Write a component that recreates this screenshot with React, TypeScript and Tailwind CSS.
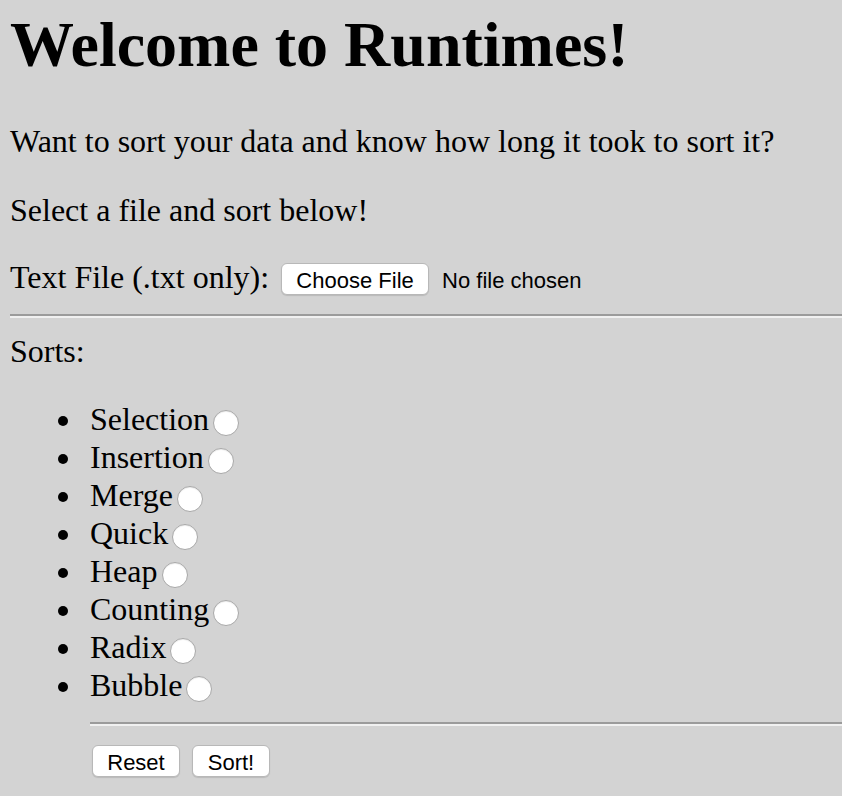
import React from "react";

const sorts = ["Selection", "Insertion", "Merge", "Quick", "Heap", "Counting", "Radix", "Bubble"];

function Btn({ w, children }: { w: string; children: React.ReactNode }) {
  return (
    <span
      className={`${w} h-[32px] flex items-center justify-center pt-[3px] bg-white border border-[#b8b8b8] rounded-[6px] shadow-[0_1px_1px_rgba(0,0,0,0.12)] font-['Liberation_Sans',Arial,sans-serif] text-[22px] leading-[24px] text-black`}
    >
      {children}
    </span>
  );
}

export default function App() {
  return (
    <div className="w-[842px] h-[796px] overflow-hidden bg-[#d3d3d3] text-black font-['Liberation_Serif','Times_New_Roman',serif] pl-[10px]">
      <h1 className="mt-[8px] text-[64px] font-bold leading-[74px]">Welcome to Runtimes!</h1>
      <p className="mt-[41px] text-[32px] leading-[37px]">Want to sort your data and know how long it took to sort it?</p>
      <p className="mt-[32px] text-[32px] leading-[37px]">Select a file and sort below!</p>
      <div className="mt-[30px] flex items-start h-[37px]">
        <span className="text-[32px] leading-[37px] mr-[12px]">Text File (.txt only):</span>
        <div className="mt-[4px] flex items-center h-[32px]">
          <Btn w="w-[148px]">Choose File</Btn>
          <span className="ml-[13px] pt-[3px] font-['Liberation_Sans',Arial,sans-serif] text-[22px] leading-[24px]">No file chosen</span>
        </div>
      </div>
      <div className="mt-[18px] h-[4px] border-t-2 border-b-2 border-t-[#9b9b9b] border-b-[#f0f0f0]" />
      <p className="mt-[15px] text-[32px] leading-[37px]">Sorts:</p>
      <ul className="mt-[30px]">
        {sorts.map((s) => (
          <li key={s} className="text-[32px] leading-[38px] pl-[48px] whitespace-nowrap">
            <span className="inline-block w-[10px] h-[10px] rounded-full bg-black align-[4px] mr-[22px]" />
            {s}
            <span className="inline-block w-[26px] h-[26px] rounded-full bg-white border border-[#a8a8a8] shadow-[inset_0_1px_1px_rgba(0,0,0,0.08)] align-[-6px] ml-[4px]" />
          </li>
        ))}
      </ul>
      <div className="mt-[18px] ml-[80px] h-[4px] border-t-2 border-b-2 border-t-[#9b9b9b] border-b-[#f0f0f0]" />
      <div className="mt-[19px] ml-[82px] flex gap-[12px]">
        <Btn w="w-[88px]">Reset</Btn>
        <Btn w="w-[78px]">Sort!</Btn>
      </div>
    </div>
  );
}
